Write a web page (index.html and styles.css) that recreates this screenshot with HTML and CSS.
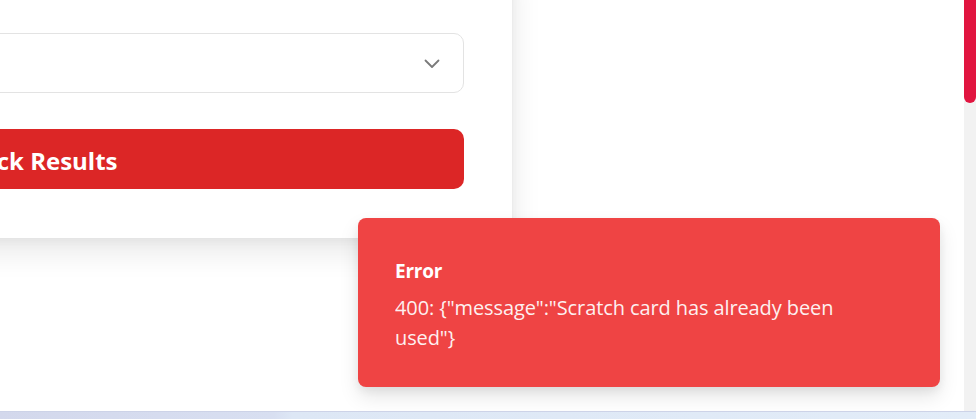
FILE: index.html
```html
<!DOCTYPE html>
<html lang="en">
<head>
<meta charset="utf-8">
<title>Check Results</title>
<link rel="stylesheet" href="styles.css">
</head>
<body>
  <div class="viewport">
    <main class="main">
      <section class="card">
        <div class="select">
          <span class="select-value"></span>
          <svg class="chevron" width="16" height="10" viewBox="0 0 16 10" aria-hidden="true">
            <path d="M1.5 1.5 L8 8 L14.5 1.5" fill="none" stroke="#7a7a7a" stroke-width="1.8" stroke-linecap="round" stroke-linejoin="round"/>
          </svg>
        </div>
        <button class="submit" type="button">Check Results</button>
      </section>

      <div class="toast" role="alert">
        <div class="toast-title">Error</div>
        <div class="toast-desc">400: {"message":"Scratch card has already been used"}</div>
      </div>
    </main>
    <div class="scrollbar"><div class="thumb"></div></div>
  </div>
  <div class="strip"></div>
</body>
</html>
```
FILE: styles.css
```css
* { box-sizing: border-box; }

html, body {
  margin: 0;
  padding: 0;
  width: 976px;
  height: 419px;
  overflow: hidden;
  background: #ffffff;
  font-family: "Open Sans", "Noto Sans", sans-serif;
}

.viewport {
  display: flex;
  height: 411px;
}

.main {
  position: relative;
  flex: 1;
  overflow: hidden;
  background: #ffffff;
}

.card {
  width: 956px;
  margin-left: -443px;
  margin-top: -40px;
  padding: 73px 48px 49px 48px;
  background: #ffffff;
  border-right: 1px solid #ececec;
  box-shadow: 0 14px 28px rgba(0, 0, 0, 0.09), 0 4px 10px rgba(0, 0, 0, 0.04);
  display: flex;
  flex-direction: column;
  gap: 36px;
}

.select {
  height: 60px;
  border: 1px solid #e3e3e3;
  border-radius: 10px;
  background: #ffffff;
  display: flex;
  align-items: center;
  justify-content: space-between;
  padding: 0 23px 0 16px;
}

.chevron { display: block; margin-top: 2px; }

.submit {
  height: 60px;
  border: 0;
  border-radius: 10px;
  background: #dc2626;
  color: #ffffff;
  font-family: "Open Sans", "Noto Sans", sans-serif;
  font-weight: 700;
  font-size: 24px;
  text-align: center;
  padding: 3px 0 0 0;
}

.toast {
  position: absolute;
  right: 24px;
  bottom: 24px;
  width: 582px;
  height: 169px;
  background: #ef4444;
  border-radius: 8px;
  padding: 39px 75px 0 37px;
  color: #ffffff;
  box-shadow: 0 10px 20px rgba(0, 0, 0, 0.1), 0 4px 8px rgba(0, 0, 0, 0.06);
}

.toast-title {
  font-size: 19px;
  line-height: 28px;
  font-weight: 700;
  letter-spacing: -0.2px;
}

.toast-desc {
  margin-top: 8px;
  font-size: 20px;
  line-height: 30px;
  opacity: 0.92;
  letter-spacing: -0.1px;
}

.scrollbar {
  width: 12px;
  background: #f2f2f2;
}

.thumb {
  height: 103px;
  background: #e11540;
  border-radius: 0 0 6px 6px;
}

.strip {
  height: 8px;
  background: linear-gradient(90deg, #d3d8ec 0%, #d8dff1 28%, #dde7f5 30%, #e2ecf8 100%);
  border-top: 1px solid #cdd3e8;
}
```
